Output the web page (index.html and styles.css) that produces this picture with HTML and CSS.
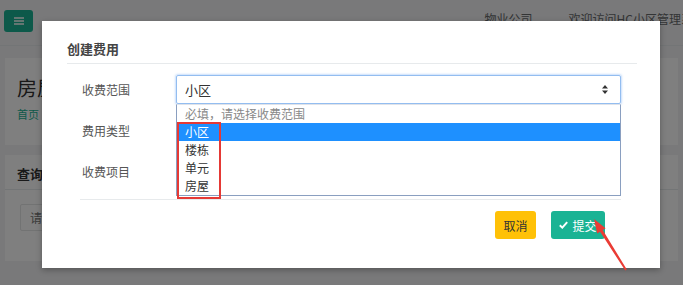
FILE: index.html
```html
<!DOCTYPE html>
<html lang="zh-CN">
<head>
    <meta charset="UTF-8">
    <meta name="viewport" content="width=device-width, initial-scale=1.0">
    <title>创建费用</title>
    <link rel="stylesheet" href="styles.css">
</head>
<body>
    <div class="page">
        <div class="topbar">
            <button class="menu-btn">
                <svg width="10" height="8" viewBox="0 0 10 8"><path d="M0 1h10M0 4h10M0 7h10" stroke="#fff" stroke-width="1.6"/></svg>
            </button>
            <div class="top-links">
                <span>物业公司</span>
                <span>欢迎访问HC小区管理系统</span>
            </div>
        </div>

        <div class="card heading">
            <h2>房屋</h2>
            <a href="#">首页</a>
        </div>

        <div class="card search">
            <div class="card-title">查询条件</div>
            <div class="card-body">
                <input type="text" placeholder="请输入">
            </div>
        </div>
    </div>

    <div class="backdrop"></div>

    <div class="modal">
        <div class="modal-head">创建费用</div>
        <div class="form">
            <div class="row">
                <label>收费范围</label>
                <div class="field">
                    <div class="select focused">
                        <span>小区</span>
                        <svg class="caret" width="6" height="9" viewBox="0 0 6 9"><path d="M3 0L6 3.4H0z M3 9L0 5.6h6z" fill="#333"/></svg>
                    </div>
                    <ul class="options">
                        <li class="placeholder">必填，请选择收费范围</li>
                        <li class="active">小区</li>
                        <li>楼栋</li>
                        <li>单元</li>
                        <li>房屋</li>
                        <div class="mark"></div>
                    </ul>
                </div>
            </div>
            <div class="row">
                <label>费用类型</label>
                <div class="field"><div class="select"></div></div>
            </div>
            <div class="row">
                <label>收费项目</label>
                <div class="field"><div class="select"></div></div>
            </div>
        </div>
        <div class="modal-foot">
            <button class="btn btn-cancel">取消</button>
            <button class="btn btn-submit">
                <svg width="9" height="8" viewBox="0 0 9 8"><path d="M0.8 4.2L3.3 6.6L8.2 1.2" stroke="#fff" stroke-width="2" fill="none"/></svg>
                提交
            </button>
        </div>
    </div>

    <svg class="arrow" width="683" height="285" viewBox="0 0 683 285">
        <polygon points="594,219 605.6,228.2 602.7,230.1 626.8,269.4 625.2,270.6 600.1,231.7 597.2,233.6" fill="#ea3c35"/>
    </svg>
</body>
</html>
```

FILE: styles.css
```css
body {
    margin: 0;
    width: 683px;
    height: 285px;
    overflow: hidden;
    position: relative;
    background-color: #f3f3f4;
    font-family: 'Noto Sans CJK SC', 'Noto Sans', sans-serif;
    font-size: 12px;
    color: #676a6c;
}
.topbar {
    height: 45px;
    display: flex;
    justify-content: space-between;
    border-bottom: 1px solid #e7eaec;
}
.menu-btn {
    margin: 10px 0 0 4px;
    width: 29px;
    height: 22px;
    border: none;
    border-radius: 3px;
    background-color: #1ab394;
    display: flex;
    align-items: center;
    justify-content: center;
    padding: 0;
}
.top-links {
    display: flex;
    gap: 36px;
    padding: 10px 0 0;
    margin-right: -22px;
    white-space: nowrap;
    color: #676a6c;
}
.card {
    background-color: #fff;
    margin: 0 5px;
}
.heading {
    margin-top: 12px;
    height: 87px;
    padding: 18px 12px 0;
    box-sizing: border-box;
}
.heading h2 {
    margin: 0;
    font-size: 20px;
    font-weight: 400;
    line-height: 24px;
    color: #333;
}
.heading a {
    display: block;
    margin-top: 6px;
    font-size: 11px;
    color: #1ab394;
    text-decoration: none;
}
.search {
    margin-top: 10px;
    height: 106px;
}
.card-title {
    padding: 9px 12px 0;
    height: 25px;
    font-size: 13px;
    font-weight: 600;
    color: #333;
    border-bottom: 1px solid #e7eaec;
}
.card-body {
    padding: 14px 15px;
}
.card-body input {
    width: 200px;
    height: 27px;
    box-sizing: border-box;
    border: 1px solid #e5e6e7;
    border-radius: 2px;
    padding: 0 9px;
    font-family: inherit;
    font-size: 12px;
}
.backdrop {
    position: absolute;
    inset: 0;
    background-color: rgba(0, 0, 0, 0.5);
}
.modal {
    position: absolute;
    left: 42px;
    top: 21px;
    width: 618px;
    height: 247px;
    box-sizing: border-box;
    padding: 0 23px 0 25px;
    background-color: #fff;
    box-shadow: 0 2px 6px rgba(0, 0, 0, 0.3);
}
.modal-head {
    padding: 20px 0 6px;
    line-height: 16px;
    font-size: 13px;
    font-weight: 600;
    color: #444;
    border-bottom: 1px solid #e7eaec;
}
.form {
    margin: 11px 16px 0 13px;
    padding-bottom: 13px;
    border-bottom: 1px solid #e7eaec;
    display: flex;
    flex-direction: column;
    gap: 12px;
}
.row {
    display: flex;
    align-items: center;
    height: 29px;
}
.row label {
    width: 96px;
    padding-left: 2px;
    box-sizing: border-box;
    color: #555;
}
.field {
    flex: 1;
    position: relative;
}
.select {
    height: 29px;
    box-sizing: border-box;
    border: 1px solid #e5e6e7;
    border-radius: 2px;
    padding: 0 12px 0 8px;
    display: flex;
    align-items: center;
    justify-content: space-between;
    font-size: 13px;
    color: #333;
}
.select.focused {
    border-color: #93bdf0;
    box-shadow: 0 0 2px 1px rgba(100, 160, 240, 0.35);
}
.options {
    position: absolute;
    left: 0;
    right: 0;
    top: 29px;
    margin: 0;
    padding: 0;
    list-style: none;
    background-color: #fff;
    border: 1px solid #8a9fc0;
    border-top-color: #dfe3ea;
    z-index: 2;
}
.options li {
    height: 18px;
    line-height: 18px;
    padding-left: 8px;
    font-size: 12px;
    color: #333;
}
.options .placeholder {
    color: #888;
}
.options .active {
    background-color: #1e90ff;
    color: #fff;
}
.mark {
    position: absolute;
    left: 0;
    top: 17px;
    width: 44px;
    height: 77px;
    box-sizing: border-box;
    border: 2px solid #e53935;
}
.modal-foot {
    display: flex;
    justify-content: flex-end;
    gap: 15px;
    padding: 11px 32px 0 0;
}
.btn {
    height: 28px;
    border: none;
    border-radius: 3px;
    font-family: inherit;
    font-size: 12px;
    padding: 0;
    white-space: nowrap;
    display: flex;
    align-items: center;
    gap: 4px;
}
.btn-cancel {
    width: 41px;
    justify-content: center;
    background-color: #ffc107;
    color: #333;
}
.btn-submit {
    width: 54px;
    justify-content: center;
    background-color: #1ab394;
    color: #fff;
}
.arrow {
    position: absolute;
    left: 0;
    top: 0;
}
```
